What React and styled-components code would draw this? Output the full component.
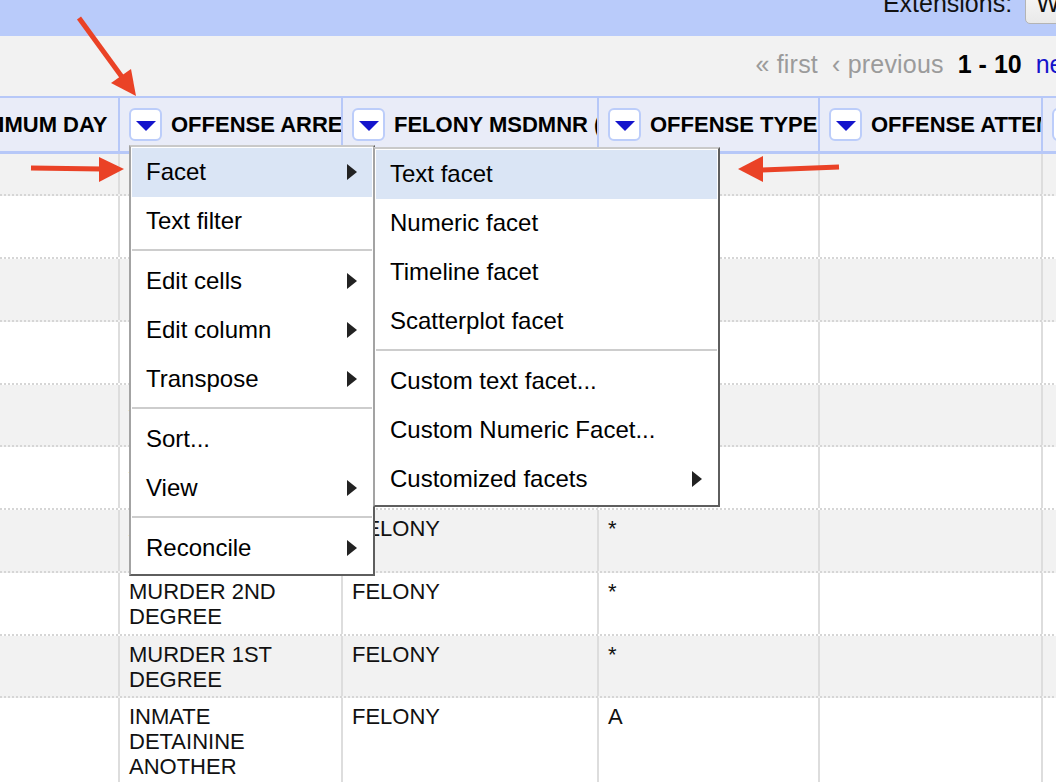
import React from "react";
import styled, { createGlobalStyle } from "styled-components";

const GlobalStyle = createGlobalStyle`
  *, *::before, *::after { box-sizing: border-box; }
  html, body { margin: 0; padding: 0; }
  body {
    width: 1056px;
    height: 782px;
    overflow: hidden;
    background: #ffffff;
    color: #000;
    font-family: "Liberation Sans", Arial, Helvetica, sans-serif;
  }
`;

const Viewport = styled.div`
  position: relative;
  width: 1056px;
  height: 782px;
  overflow: hidden;
`;

// the page is scrolled sideways, so its left columns and right end fall outside the crop
const Frame = styled.div`
  width: 1274px;
  margin-left: -92px;
  display: flex;
  flex-direction: column;
`;

const TopBar = styled.div`
  height: 36px;
  flex-shrink: 0;
  background: #b9cbfa;
  display: flex;
  justify-content: flex-end;
  align-items: flex-end;
  padding-right: 39px;
`;

const ExtLabel = styled.span`
  font-size: 25px;
  line-height: 29px;
  color: #111;
  margin-bottom: 18px;
  white-space: nowrap;
`;

const ExtButton = styled.div`
  height: 40px;
  margin: 0 0 12px 13px;
  padding: 0 10px 5px;
  display: flex;
  align-items: flex-end;
  border: 1px solid #b4b4b4;
  border-radius: 5px;
  background: linear-gradient(#fbfbfb, #e9e9e9);
  font-size: 25px;
  line-height: 29px;
  color: #111;
  white-space: nowrap;
`;

const Pager = styled.div`
  height: 60px;
  flex-shrink: 0;
  background: #f2f2f2;
  display: flex;
  justify-content: flex-end;
  align-items: center;
  gap: 14px;
  padding: 0 10px 3px 0;
  font-size: 25px;
  line-height: 29px;
  white-space: nowrap;
`;

const PagerItem = styled.span`
  color: ${p => (p.$kind === "off" ? "#9b9b9b" : p.$kind === "current" ? "#000" : "#1414cc")};
  font-weight: ${p => (p.$kind === "current" ? "bold" : "normal")};
  letter-spacing: ${p => (p.$kind === "off" ? "0.2px" : "0")};
`;

const COLS = "210px 223px 256px 221px 223px 1fr";

const HeaderRow = styled.div`
  height: 58px;
  display: grid;
  grid-template-columns: ${COLS};
  background: #e9ecf8;
  border-top: 2px solid #b7c8f8;
  border-bottom: 3px solid #b7c8f8;
`;

const HeaderCell = styled.div`
  display: flex;
  align-items: center;
  gap: 9px;
  padding-left: ${p => (p.$first ? "8px" : "9px")};
  border-left: ${p => (p.$first ? "none" : "2px solid #b7c8f8")};
  overflow: hidden;
  white-space: nowrap;
  font-size: 22px;
  font-weight: bold;
  color: #000;
`;

const DropButton = styled.div`
  width: 33px;
  height: 33px;
  flex-shrink: 0;
  display: flex;
  align-items: center;
  justify-content: center;
  background: #fff;
  border: 2px solid #bccdfa;
  border-radius: 6px;
`;

const DownTriangle = styled.span`
  width: 0;
  height: 0;
  margin-top: 2px;
  border-left: 10px solid transparent;
  border-right: 10px solid transparent;
  border-top: 10px solid #1414cc;
`;

const BodyRow = styled.div`
  height: ${p => p.$h}px;
  display: grid;
  grid-template-columns: ${COLS};
  background: ${p => (p.$odd ? "#ffffff" : "#f2f2f2")};
  border-bottom: 2px dotted #d6d6d6;
`;

const BodyCell = styled.div`
  padding: 6px 10px 0 9px;
  border-left: ${p => (p.$first ? "none" : "2px solid #dddddd")};
  overflow: hidden;
  font-size: 22px;
  line-height: 25px;
  color: #111;
`;

const Menu = styled.div`
  position: absolute;
  left: ${p => p.$x}px;
  top: ${p => p.$y}px;
  width: ${p => p.$w}px;
  z-index: ${p => p.$z};
  background: #fff;
  border: 2px solid;
  border-color: #c9c9c9 #5e5e5e #5e5e5e #a3a3a3;
  padding: 1px;
`;

const MenuItem = styled.div`
  height: 49px;
  display: flex;
  align-items: center;
  justify-content: space-between;
  padding: 0 15px 2px 14px;
  background: ${p => (p.$active ? "#dae5f5" : "transparent")};
  font-size: 24px;
  color: #000;
  white-space: nowrap;
`;

const RightTriangle = styled.span`
  width: 0;
  height: 0;
  border-top: 8px solid transparent;
  border-bottom: 8px solid transparent;
  border-left: 10px solid #222;
`;

const Separator = styled.div`
  height: 2px;
  margin: 3px 0 6px;
  background: #cdcdcd;
`;

const Annotations = styled.svg`
  position: absolute;
  left: 0;
  top: 0;
  z-index: 10;
  pointer-events: none;
`;

const headers = [
  "MINIMUM DAY",
  "OFFENSE ARREST DESCRIPTION",
  "FELONY MSDMNR (F/M)",
  "OFFENSE TYPE",
  "OFFENSE ATTEMPTED",
  "OFFENSE CODE",
];

const rows = [
  { h: 42, cells: ["", "ROBBERY", "FELONY", "*", "", ""] },
  { h: 63, cells: ["", "ROBBERY 1ST DEGREE", "FELONY", "*", "", ""] },
  { h: 63, cells: ["", "ROBBERY 2ND DEGREE", "FELONY", "*", "", ""] },
  { h: 63, cells: ["", "BURGLARY 1ST DEGREE", "FELONY", "*", "", ""] },
  { h: 62, cells: ["", "ASSAULT 1ST DEGREE", "FELONY", "*", "", ""] },
  { h: 63, cells: ["", "ASSAULT 2ND DEGREE", "FELONY", "*", "", ""] },
  { h: 63, cells: ["", "ARSON 1ST DEGREE", "FELONY", "*", "", ""] },
  { h: 63, cells: ["", "MURDER 2ND DEGREE", "FELONY", "*", "", ""] },
  { h: 62, cells: ["", "MURDER 1ST DEGREE", "FELONY", "*", "", ""] },
  { h: 90, cells: ["", "INMATE DETAININE ANOTHER", "FELONY", "A", "", ""] },
];

const mainMenu = [
  { label: "Facet", sub: true, active: true },
  { label: "Text filter" },
  "sep",
  { label: "Edit cells", sub: true },
  { label: "Edit column", sub: true },
  { label: "Transpose", sub: true },
  "sep",
  { label: "Sort..." },
  { label: "View", sub: true },
  "sep",
  { label: "Reconcile", sub: true },
];

const facetMenu = [
  { label: "Text facet", active: true },
  { label: "Numeric facet" },
  { label: "Timeline facet" },
  { label: "Scatterplot facet" },
  "sep",
  { label: "Custom text facet..." },
  { label: "Custom Numeric Facet..." },
  { label: "Customized facets", sub: true },
];

const renderItems = items =>
  items.map((it, i) =>
    it === "sep" ? (
      <Separator key={i} />
    ) : (
      <MenuItem key={i} $active={it.active}>
        <span>{it.label}</span>
        {it.sub && <RightTriangle />}
      </MenuItem>
    )
  );

const RED = "#ea4226";

export default function App() {
  return (
    <Viewport>
      <GlobalStyle />
      <Frame>
        <TopBar>
          <ExtLabel>Extensions:</ExtLabel>
          <ExtButton>Wikidata</ExtButton>
        </TopBar>
        <Pager>
          <PagerItem $kind="off">« first</PagerItem>
          <PagerItem $kind="off">‹ previous</PagerItem>
          <PagerItem $kind="current">1 - 10</PagerItem>
          <PagerItem>next ›</PagerItem>
          <PagerItem>last »</PagerItem>
        </Pager>
        <HeaderRow>
          {headers.map((h, i) => (
            <HeaderCell key={h} $first={i === 0}>
              <DropButton>
                <DownTriangle />
              </DropButton>
              {h}
            </HeaderCell>
          ))}
        </HeaderRow>
        {rows.map((r, ri) => (
          <BodyRow key={ri} $h={r.h} $odd={ri % 2 === 1}>
            {r.cells.map((c, ci) => (
              <BodyCell key={ci} $first={ci === 0}>
                {c}
              </BodyCell>
            ))}
          </BodyRow>
        ))}
      </Frame>

      <Menu $x={129} $y={145} $w={246} $z={3}>
        {renderItems(mainMenu)}
      </Menu>
      <Menu $x={373} $y={147} $w={347} $z={4}>
        {renderItems(facetMenu)}
      </Menu>

      <Annotations width="1056" height="782" viewBox="0 0 1056 782">
        <line x1="79" y1="18" x2="122" y2="77" stroke={RED} strokeWidth="5" />
        <polygon points="136,96 111,83 131,69" fill={RED} />
        <line x1="31" y1="168" x2="102" y2="169" stroke={RED} strokeWidth="5" />
        <polygon points="124,169 99,157 99,182" fill={RED} />
        <line x1="760" y1="170" x2="839" y2="167" stroke={RED} strokeWidth="5" />
        <polygon points="738,169 763,156 763,182" fill={RED} />
      </Annotations>
    </Viewport>
  );
}
